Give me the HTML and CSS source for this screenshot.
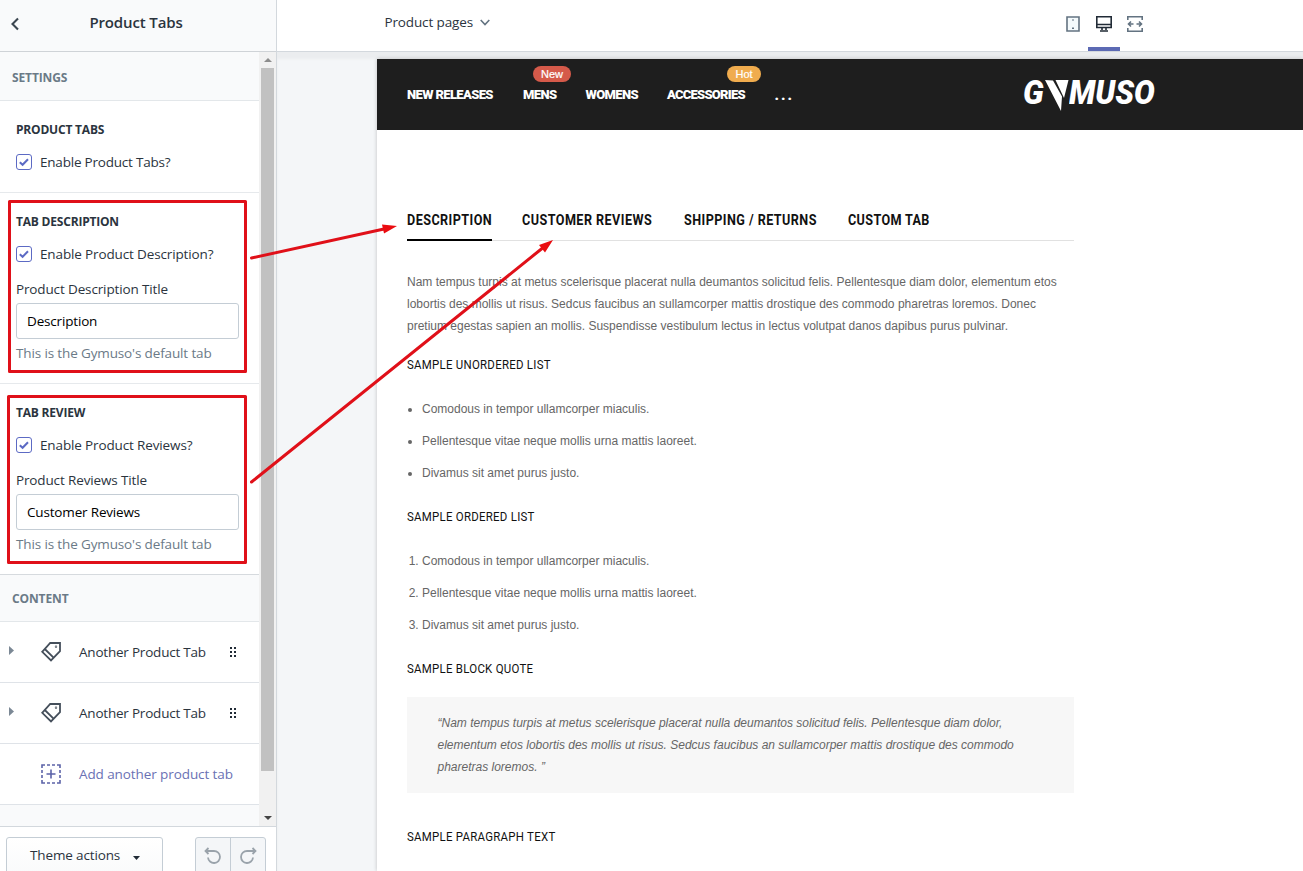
FILE: index.html
```html
<!DOCTYPE html>
<html lang="en">
<head>
<meta charset="utf-8">
<title>Product Tabs</title>
<link rel="stylesheet" href="styles.css">
</head>
<body>
<div class="app">
  <aside class="sidebar">
    <header class="side-head">
      <svg class="back" width="10" height="14" viewBox="0 0 10 14"><path d="M8 1.5 2.5 7 8 12.5" fill="none" stroke="#3b4650" stroke-width="2.1"/></svg>
      <h1 class="side-title">Product Tabs</h1>
    </header>
    <div class="side-body">
      <div class="side-content">
        <h2 class="group-head">SETTINGS</h2>
        <section class="panel">
          <h3 class="panel-title">PRODUCT TABS</h3>
          <div class="check"><svg class="box" viewBox="0 0 16 16"><rect x=".5" y=".5" width="15" height="15" rx="2.5"/><path d="M3.8 8.2 6.6 10.8 12 5.2"/></svg><span class="tight">Enable Product Tabs?</span></div>
        </section>
        <section class="panel">
          <h3 class="panel-title">TAB DESCRIPTION</h3>
          <div class="check"><svg class="box" viewBox="0 0 16 16"><rect x=".5" y=".5" width="15" height="15" rx="2.5"/><path d="M3.8 8.2 6.6 10.8 12 5.2"/></svg><span>Enable Product Description?</span></div>
          <div class="label">Product Description Title</div>
          <div class="field">Description</div>
          <div class="help">This is the Gymuso's default tab</div>
        </section>
        <section class="panel last">
          <h3 class="panel-title">TAB REVIEW</h3>
          <div class="check"><svg class="box" viewBox="0 0 16 16"><rect x=".5" y=".5" width="15" height="15" rx="2.5"/><path d="M3.8 8.2 6.6 10.8 12 5.2"/></svg><span>Enable Product Reviews?</span></div>
          <div class="label">Product Reviews Title</div>
          <div class="field">Customer Reviews</div>
          <div class="help">This is the Gymuso's default tab</div>
        </section>
        <h2 class="group-head content-head">CONTENT</h2>
        <div class="row">
          <svg class="caret" viewBox="0 0 5 9"><path d="M0 0 5 4.5 0 9z"/></svg>
          <svg class="tag" viewBox="0 0 22 22"><path d="M2.200 10.800 10.200 2H20v8.200L11 19.500zM4.800 8 13.800 16.800"/><circle cx="16" cy="5.800" r=".3"/></svg>
          <span class="row-text tight">Another Product Tab</span>
          <svg class="grip" viewBox="0 0 6 10"><path d="M0 0h2v2H0zM4 0h2v2H4zM0 4h2v2H0zM4 4h2v2H4zM0 8h2v2H0zM4 8h2v2H4z"/></svg>
        </div>
        <div class="row">
          <svg class="caret" viewBox="0 0 5 9"><path d="M0 0 5 4.5 0 9z"/></svg>
          <svg class="tag" viewBox="0 0 22 22"><path d="M2.200 10.800 10.200 2H20v8.200L11 19.500zM4.800 8 13.800 16.800"/><circle cx="16" cy="5.800" r=".3"/></svg>
          <span class="row-text tight">Another Product Tab</span>
          <svg class="grip" viewBox="0 0 6 10"><path d="M0 0h2v2H0zM4 0h2v2H4zM0 4h2v2H0zM4 4h2v2H4zM0 8h2v2H0zM4 8h2v2H4z"/></svg>
        </div>
        <div class="row add">
          <svg class="plus" viewBox="0 0 20 20"><path d="M1 4V1h3M6 1h3M11 1h3M16 1h3v3M19 6v3M19 11v3M19 16v3h-3M14 19h-3M9 19H6M4 19H1v-3M1 14v-3M1 9V6M10 5.500v9M5.500 10h9"/></svg>
          <span class="row-text">Add another product tab</span>
        </div>
      </div>
      <div class="scrollbar">
        <svg class="sb-arrow" viewBox="0 0 8 4"><path d="M0 4 4 0 8 4z" fill="#8d8d8d"/></svg>
        <div class="thumb"></div>
        <svg class="sb-arrow" viewBox="0 0 8 4"><path d="M0 0 4 4 8 0z" fill="#444"/></svg>
      </div>
    </div>
    <footer class="side-foot">
      <div class="btn"><span>Theme actions</span><svg width="7" height="4" viewBox="0 0 7 4"><path d="M0 0h7L3.500 4z" fill="#212b36"/></svg></div>
      <div class="history">
        <div class="hbtn"><svg width="18" height="18" viewBox="0 0 18 18"><path d="M1.500 4h8.500a6 6 0 1 1-6 6.500M4.500 1 1.500 4l3 3"/></svg></div>
        <div class="hbtn"><svg width="18" height="18" viewBox="0 0 18 18"><path d="M16.500 4H8a6 6 0 1 0 6 6.500M13.500 1l3 3-3 3"/></svg></div>
      </div>
    </footer>
  </aside>
  <div class="work">
    <header class="topbar">
      <div class="page-select"><span>Product pages</span><svg width="10" height="7" viewBox="0 0 10 7"><path d="M.7 1 5 5.500 9.300 1" fill="none" stroke="#637381" stroke-width="1.600"/></svg></div>
      <nav class="devices">
        <div class="device"><svg width="14" height="16" viewBox="0 0 14 16"><path d="M1 1h12v14H1z" fill="#f4fafc" stroke="#637381" stroke-width="1.600"/><path d="M6 3.500h2v1H6zM6 11.500h2v1.500H6z" fill="#637381"/></svg></div>
        <div class="device active"><svg width="16" height="16" viewBox="0 0 16 16"><path d="M.8.800h14.400v10.700H.8zM.8 8.500h14.400M6 11.500v2.500M10 11.500v2.500M4 15h8" fill="none" stroke="#212b36" stroke-width="1.600"/></svg></div>
        <div class="device"><svg width="16" height="16" viewBox="0 0 16 16"><path d="M.8 4V.800h14.400V4M.8 12v3.200h14.400V12M1.500 8H6.500M9.500 8h5M4 5.500 1.500 8 4 10.500M12 5.500 14.500 8 12 10.500" fill="none" stroke="#637381" stroke-width="1.600"/></svg></div>
      </nav>
    </header>
    <div class="canvas">
      <div class="preview">
        <header class="shop-head">
          <nav class="menu">
            <span class="m-releases">NEW RELEASES</span>
            <span class="m-mens">MENS<b class="badge new">New</b></span>
            <span class="m-womens">WOMENS</span>
            <span class="m-accessories">ACCESSORIES<b class="badge hot">Hot</b></span>
            <span class="m-more">...</span>
          </nav>
          <div class="logo"><span class="logo-g">G</span><svg width="24" height="31" viewBox="0 0 24 31"><path d="M0 0 8 .5 17 16.500 16 31zM10.500 0H23.500L19 18z" fill="#fff"/></svg><span class="logo-rest">MUSO</span></div>
        </header>
        <main class="product">
          <nav class="tabs">
            <span class="tab tab-description on"><span class="tab-text">DESCRIPTION</span></span>
            <span class="tab tab-reviews"><span class="tab-text">CUSTOMER REVIEWS</span></span>
            <span class="tab tab-shipping"><span class="tab-text">SHIPPING / RETURNS</span></span>
            <span class="tab tab-custom"><span class="tab-text">CUSTOM TAB</span></span>
          </nav>
          <p class="intro">Nam tempus turpis at metus scelerisque placerat nulla deumantos solicitud felis. Pellentesque diam dolor, elementum etos<br>lobortis des mollis ut risus. Sedcus faucibus an sullamcorper mattis drostique des commodo pharetras loremos. Donec<br>pretium egestas sapien an mollis. Suspendisse vestibulum lectus in lectus volutpat danos dapibus purus pulvinar.</p>
          <h4 class="h-first">SAMPLE UNORDERED LIST</h4>
          <ul class="list"><li>Comodous in tempor ullamcorper miaculis.</li><li>Pellentesque vitae neque mollis urna mattis laoreet.</li><li>Divamus sit amet purus justo.</li></ul>
          <h4>SAMPLE ORDERED LIST</h4>
          <ol class="list"><li>Comodous in tempor ullamcorper miaculis.</li><li>Pellentesque vitae neque mollis urna mattis laoreet.</li><li>Divamus sit amet purus justo.</li></ol>
          <h4 class="h-quote">SAMPLE BLOCK QUOTE</h4>
          <blockquote class="quote">“Nam tempus turpis at metus scelerisque placerat nulla deumantos solicitud felis. Pellentesque diam dolor,<br>elementum etos lobortis des mollis ut risus. Sedcus faucibus an sullamcorper mattis drostique des commodo<br>pharetras loremos. ”</blockquote>
          <h4 class="h-last">SAMPLE PARAGRAPH TEXT</h4>
        </main>
      </div>
    </div>
  </div>
  <svg class="notes" width="1303" height="871" viewBox="0 0 1303 871">
    <g fill="none" stroke="#e01019" stroke-width="3" stroke-linejoin="round" stroke-linecap="round">
      <path d="M9.500 201.500h236v170H9.500zM8.500 396.500h237v166h-237z"/>
      <path d="M251.500 258 384 229M251.500 482 542 248.500"/>
    </g>
    <path d="M397 226 384 233.500 382 224.500zM553 240 545 252.500 539 245z" fill="#ea0c10"/>
  </svg>
</div>
</body>
</html>
```
FILE: styles.css
```css
* { box-sizing: border-box; }
html, body { margin: 0; height: 871px; overflow: hidden; }
h1, h2, h3, h4, p, ul, ol, blockquote { margin: 0; padding: 0; }
svg { flex: none; }
.app { display: flex; width: 1303px; height: 871px; overflow: hidden; position: relative; font: 13.5px/20px "Open Sans", sans-serif; letter-spacing: -.135px; color: #2b343e; }
.tight { letter-spacing: -.21px; }

.sidebar { width: 277px; flex: none; display: flex; flex-direction: column; border-right: 1px solid #d3d8dd; background: #f9fafb; }
.side-head { height: 52px; flex: none; border-bottom: 1px solid #cfd3d7; display: flex; align-items: center; padding: 0 14px 8px 11px; }
.back { margin: 5px 0 0 -1px; }
.side-title { flex: 1; text-align: center; font-size: 15px; font-weight: 600; padding-right: 10px; }
.side-body { height: 774px; flex: none; display: flex; overflow: hidden; }
.side-content { width: 259px; flex: none; }
.group-head { height: 49px; display: flex; align-items: center; padding: 3px 0 0 12px; font-size: 12px; font-weight: 700; letter-spacing: -.12px; color: #6b7a87; border-bottom: 1px solid #e3e7ea; }
.panel { background: #fff; border-bottom: 1px solid #e6e9ec; padding: 19px 20px 20px 16px; }
.panel.last { border-color: #d6dade; }
.panel-title { font-size: 12px; line-height: 20px; font-weight: 700; letter-spacing: -.2px; }
.check { display: flex; gap: 8px; align-items: center; margin-top: 12px; height: 20px; }
.box { width: 16px; height: 16px; }
.box rect { fill: #fff; stroke: #5c6ac4; }
.box path { fill: none; stroke: #5c6ac4; stroke-width: 2; }
.label { margin-top: 15px; white-space: nowrap; }
.field { margin-top: 4px; height: 36px; width: 223px; border: 1px solid #c4cdd5; border-radius: 3px; padding: 7px 10px; color: #000; letter-spacing: -.17px; }
.help { margin-top: 4px; color: #6b7a87; white-space: nowrap; }
.content-head { height: 47px; padding-top: 2px; }
.row { height: 61px; background: #fff; border-bottom: 1px solid #dfe3e8; display: flex; align-items: center; padding-left: 9px; }
.caret { width: 5px; height: 9px; fill: #7b8895; margin-top: -3px; }
.tag { width: 22px; height: 22px; margin-left: 26px; fill: none; stroke: #454f5b; stroke-width: 1.8; }
.row-text { margin-left: 17px; white-space: nowrap; }
.grip { width: 6px; height: 10px; margin-left: auto; margin-right: 23px; fill: #212b36; }
.add { padding-left: 41px; color: #6a71b4; letter-spacing: -.09px; }
.plus { width: 20px; height: 20px; fill: none; stroke: #5c63a8; stroke-width: 1.6; }
.add .row-text { margin-left: 18px; }
.scrollbar { width: 17px; background: #f1f1f1; display: flex; flex-direction: column; align-items: center; padding: 6px 0; }
.sb-arrow { width: 8px; height: 4px; }
.thumb { width: 13px; height: 703px; margin: 6px 0 45px; background: #c1c1c1; }
.side-foot { height: 45px; flex: none; border-top: 1px solid #d3d8dd; background: #fff; padding: 10px 10px 0 6px; display: flex; justify-content: space-between; }
.btn { width: 157px; height: 40px; border: 1px solid #c4cdd5; border-radius: 3px; background: linear-gradient(#fff, #f9fafb); display: flex; padding: 7px 0 0 23px; gap: 13px; }
.btn svg { margin-top: 11px; }
.history { display: flex; height: 40px; border: 1px solid #c4cdd5; border-radius: 3px; background: #f4f6f8; }
.hbtn { width: 34px; padding: 9px 0 0 8px; }
.hbtn + .hbtn { width: 35px; border-left: 1px solid #c4cdd5; }
.hbtn svg { fill: none; stroke: #9aa3ab; stroke-width: 1.8; }

.work { flex: 1; display: flex; flex-direction: column; min-width: 0; }
.topbar { height: 52px; flex: none; background: #fff; border-bottom: 1px solid #d3d8dd; display: flex; }
.page-select { width: 788px; padding: 12px 0 0 107.5px; display: flex; gap: 7px; }
.page-select svg { margin-top: 7px; }
.devices { display: flex; margin-left: -8px; }
.device { width: 31px; padding-top: 16px; display: flex; justify-content: center; }
.device:last-child { width: 30px; }
.device.active { width: 32px; border-bottom: 4px solid #5c6ab4; }
.canvas { flex: 1; background: #f4f6f8; padding: 7px 0 0 100px; box-shadow: inset 0 7px 3px #ebedef; }
.preview { background: #fff; height: 812px; box-shadow: 0 0 4px rgba(0,0,0,.22); }
.shop-head { height: 71px; background: #1e1e1e; color: #fff; display: flex; padding-left: 30px; font-family: Roboto, sans-serif; }
.menu { width: 617px; flex: none; display: flex; gap: 30px; padding-top: 25px; font-size: 13px; font-weight: 900; line-height: 22px; letter-spacing: -.63px; }
.menu span { position: relative; white-space: nowrap; }
.m-releases { width: 86px; }
.m-mens { width: 32.5px; }
.m-womens { width: 51.5px; }
.m-accessories { width: 77.5px; letter-spacing: -.75px; }
.menu .m-more { font-size: 15px; letter-spacing: 2px; }
.badge { position: absolute; top: -18px; height: 16px; border-radius: 8px; font: 11px/16px "Liberation Sans", sans-serif; text-align: center; letter-spacing: 0; -webkit-text-stroke: .2px #fff; }
.new { left: 10px; width: 38px; background: #d55a4a; }
.hot { left: 60px; width: 34px; background: #f0ac4e; }
.logo { display: flex; padding-top: 16px; margin-left: -1px; font-size: 34px; line-height: 34px; font-weight: 900; font-style: italic; letter-spacing: 0; }
.logo svg { margin-top: 5px; }
.logo-g { width: 22px; transform: scaleX(.92); transform-origin: left; }
.logo-rest { transform: scaleX(.91); transform-origin: left; }
.product { padding: 61px 0 0 30px; width: 697px; font: 12px/22px "Liberation Sans", Arial, sans-serif; letter-spacing: 0; color: #666; }
.tabs { display: flex; gap: 30px; height: 50px; border-bottom: 1px solid #e1e1e1; font: 700 14px/22px Roboto, sans-serif; color: #111; }
.tab { height: 50px; padding-top: 18px; white-space: nowrap; }
.tab.on { border-bottom: 2px solid #000; }
.tab-text { display: inline-block; transform: scaleX(.9); transform-origin: left; letter-spacing: .5px; }
.tab-description { width: 85px; }
.tab-reviews { width: 132px; }
.tab-shipping { width: 134px; }
.tab-custom { width: 82px; }
.tab-custom .tab-text { letter-spacing: .4px; }
.intro { margin-top: 30px; white-space: nowrap; }
h4 { font: 400 13px/22px Roboto, sans-serif; letter-spacing: .3px; color: #111; margin: 22px 0; transform: scaleX(.88); transform-origin: left; }
h4.h-first { margin-top: 17px; }
.list { padding-left: 15px; }
.list li + li { margin-top: 10px; }
.list li::marker { font-size: 12px; }
h4.h-quote { margin-bottom: 17px; }
.quote { background: #f7f7f7; padding: 15px 30px 15px 30.5px; font-style: italic; white-space: nowrap; }
h4.h-last { margin-top: 33px; }
.notes { position: absolute; left: 0; top: 0; pointer-events: none; }
```
